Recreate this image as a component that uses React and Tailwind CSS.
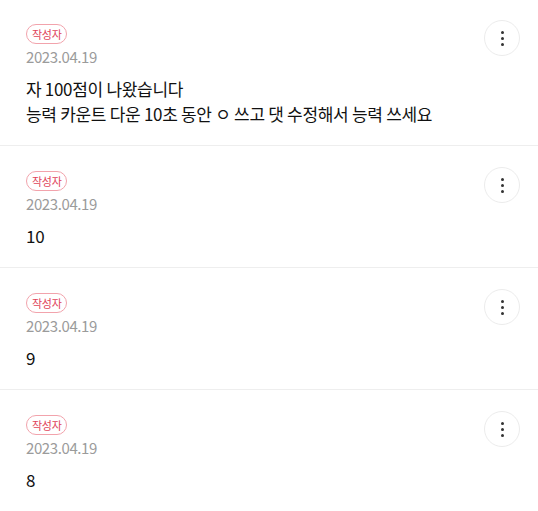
const comments = [
  { id: 1, date: "2023.04.19", lines: ["자 100점이 나왔습니다", "능력 카운트 다운 10초 동안 ㅇ 쓰고 댓 수정해서 능력 쓰세요"] },
  { id: 2, date: "2023.04.19", lines: ["10"] },
  { id: 3, date: "2023.04.19", lines: ["9"] },
  { id: 4, date: "2023.04.19", lines: ["8"] },
];

const MoreButton = () => (
  <button className="w-9 h-9 shrink-0 rounded-full border border-[#ececec] bg-white flex flex-col items-center justify-center gap-[3px] mt-[21px]">
    <span className="w-[3px] h-[3px] rounded-full bg-[#333]" />
    <span className="w-[3px] h-[3px] rounded-full bg-[#333]" />
    <span className="w-[3px] h-[3px] rounded-full bg-[#333]" />
  </button>
);

const CommentRow = ({ comment, first }) => {
  return (
    <div className={`flex justify-between pl-[26px] pr-[18px] border-b border-[#eeeeee] ${first ? "-mt-[1px]" : ""}`}>
      <div className="pt-[25px] pb-[19px]">
        <div className="flex">
          <span className="flex items-center h-5 px-[5px] rounded-full border border-[#f2a3ac] text-[11px] leading-none text-[#e0435a] tracking-[-0.3px]">
            작성자
          </span>
        </div>
        <div className="mt-[2px] text-[15px] leading-[22px] text-[#9b9b9b] tracking-[-0.4px]">{comment.date}</div>
        <div className="mt-[8px] text-[17px] leading-[25px] text-[#111] tracking-[-0.3px]">
          {comment.lines.map((line, i) => (
            <p key={i}>{line}</p>
          ))}
        </div>
      </div>
      <MoreButton />
    </div>
  );
};

export default function App() {
  return (
    <div className="w-[538px] min-h-[511px] bg-white overflow-hidden" style={{ fontFamily: '"Noto Sans CJK KR", "Noto Sans", sans-serif' }}>
      {comments.map((c, i) => (
        <CommentRow key={c.id} comment={c} first={i === 0} />
      ))}
    </div>
  );
}
